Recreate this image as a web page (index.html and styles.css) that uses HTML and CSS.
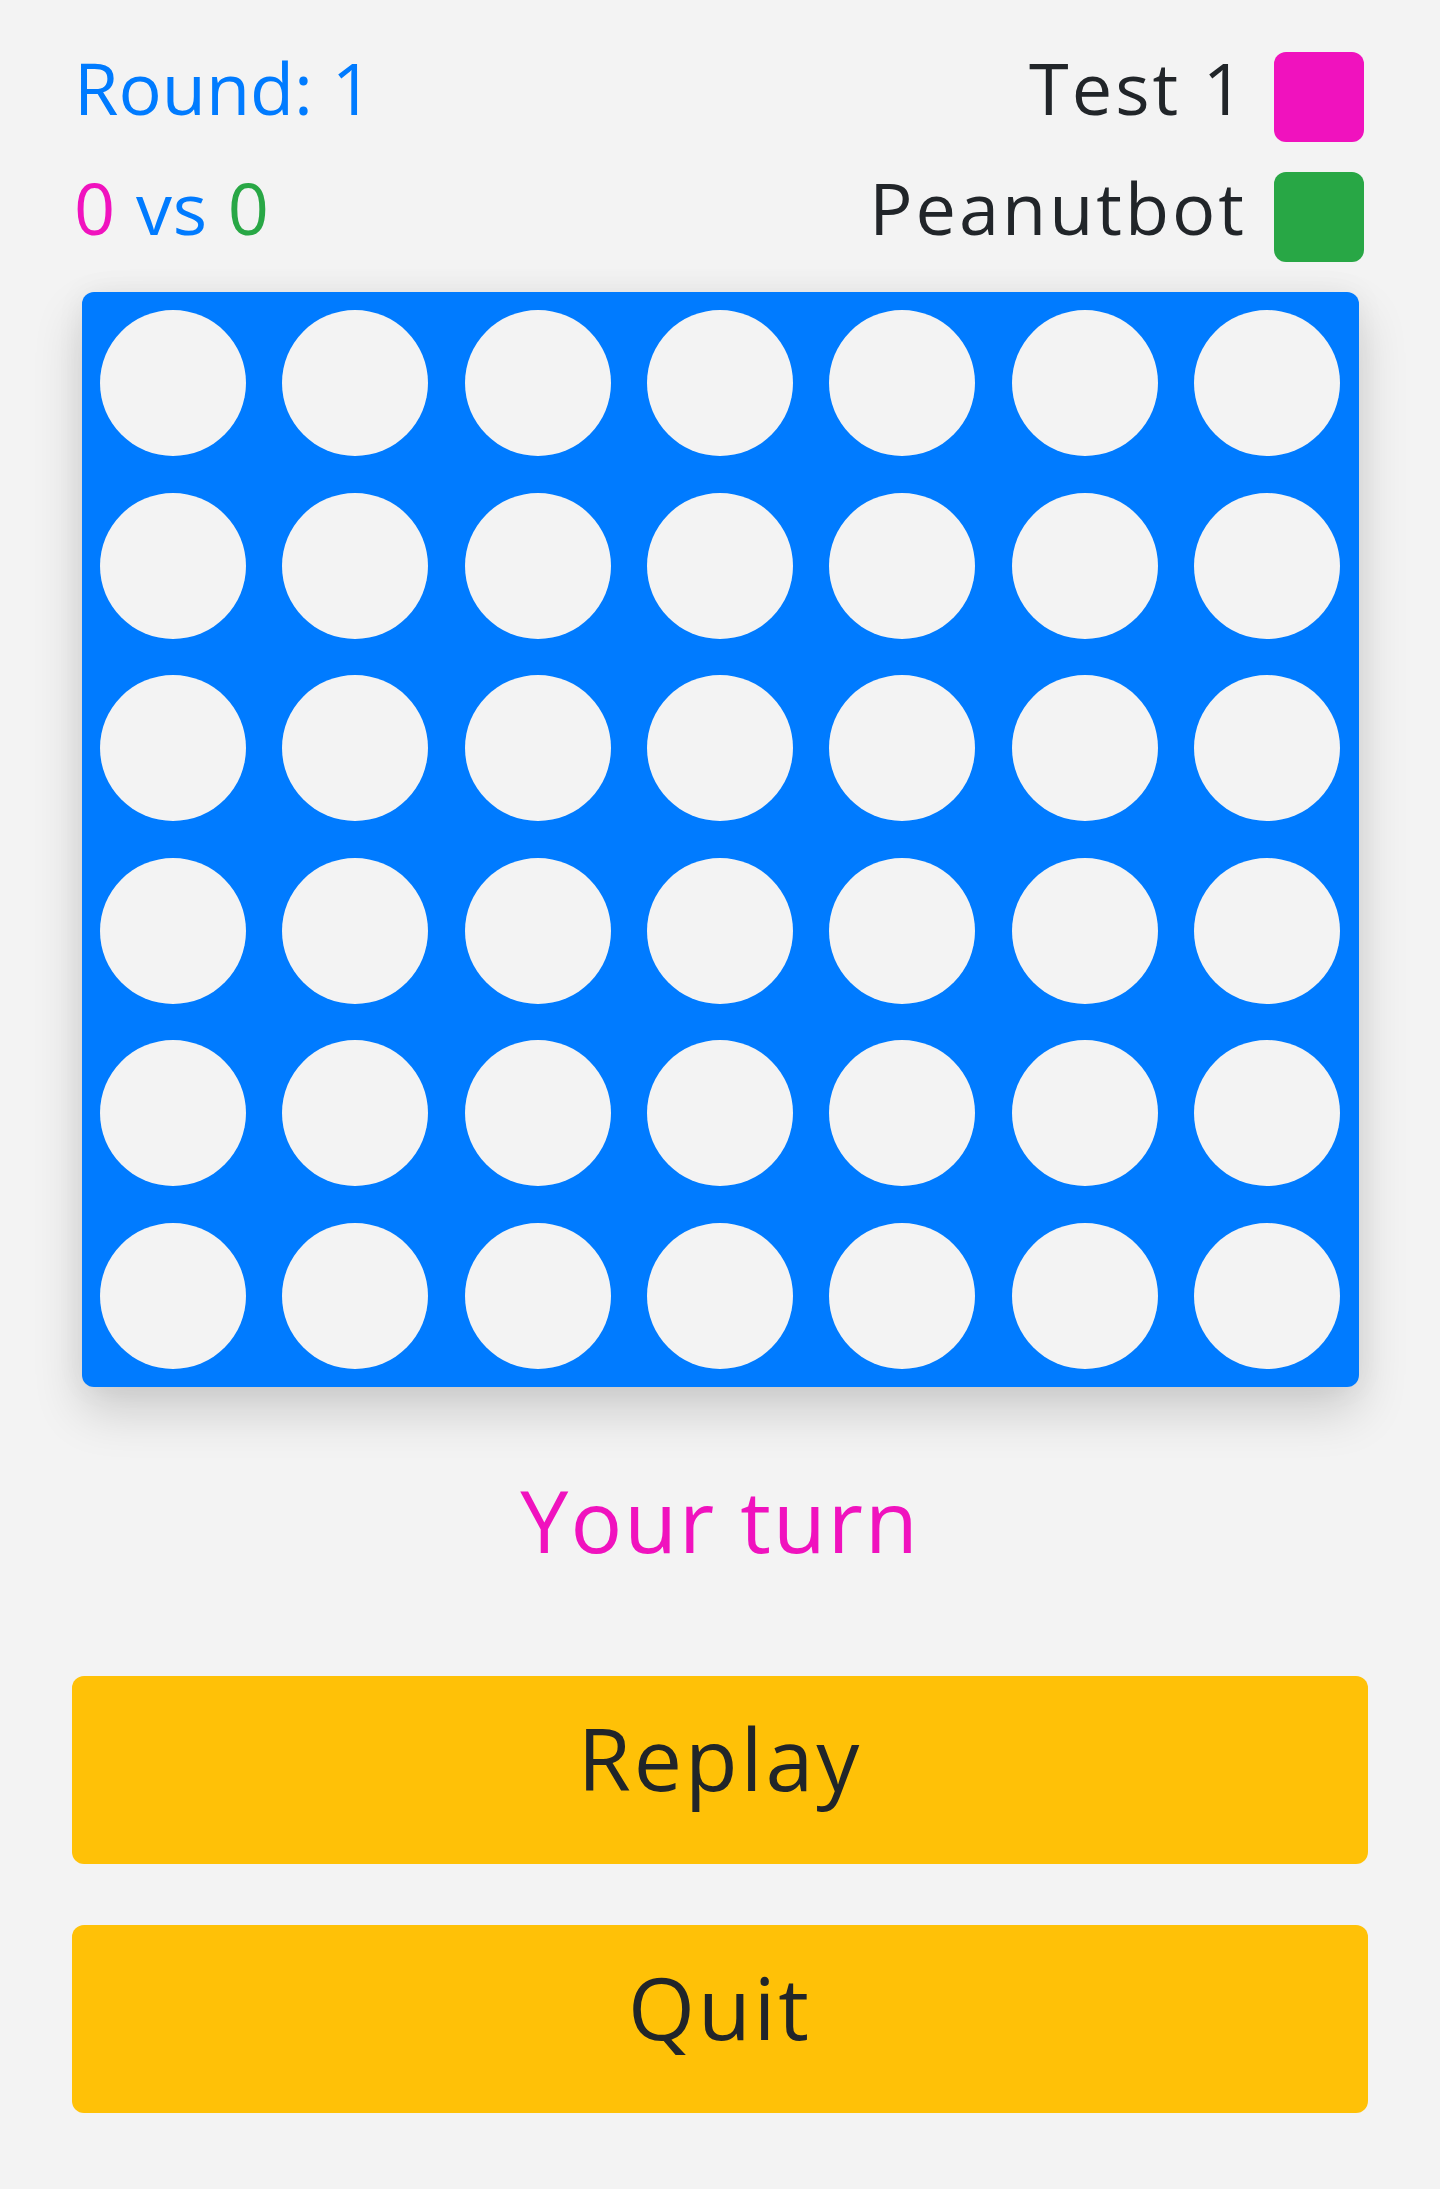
FILE: index.html
```html
<!DOCTYPE html>
<html lang="en">
<head>
<meta charset="utf-8">
<title>Connect Four</title>
<link rel="stylesheet" href="styles.css">
</head>
<body>
<main class="page">
  <header class="top">
    <div class="stats">
      <div class="row round">Round: 1</div>
      <div class="row score"><span class="p1">0</span> vs <span class="p2">0</span></div>
    </div>
    <div class="players">
      <div class="row player"><span class="name">Test 1</span><span class="swatch pink"></span></div>
      <div class="row player"><span class="name">Peanutbot</span><span class="swatch green"></span></div>
    </div>
  </header>

  <section class="board">
    <div class="cell"><span class="hole"></span></div><div class="cell"><span class="hole"></span></div><div class="cell"><span class="hole"></span></div><div class="cell"><span class="hole"></span></div><div class="cell"><span class="hole"></span></div><div class="cell"><span class="hole"></span></div><div class="cell"><span class="hole"></span></div>
    <div class="cell"><span class="hole"></span></div><div class="cell"><span class="hole"></span></div><div class="cell"><span class="hole"></span></div><div class="cell"><span class="hole"></span></div><div class="cell"><span class="hole"></span></div><div class="cell"><span class="hole"></span></div><div class="cell"><span class="hole"></span></div>
    <div class="cell"><span class="hole"></span></div><div class="cell"><span class="hole"></span></div><div class="cell"><span class="hole"></span></div><div class="cell"><span class="hole"></span></div><div class="cell"><span class="hole"></span></div><div class="cell"><span class="hole"></span></div><div class="cell"><span class="hole"></span></div>
    <div class="cell"><span class="hole"></span></div><div class="cell"><span class="hole"></span></div><div class="cell"><span class="hole"></span></div><div class="cell"><span class="hole"></span></div><div class="cell"><span class="hole"></span></div><div class="cell"><span class="hole"></span></div><div class="cell"><span class="hole"></span></div>
    <div class="cell"><span class="hole"></span></div><div class="cell"><span class="hole"></span></div><div class="cell"><span class="hole"></span></div><div class="cell"><span class="hole"></span></div><div class="cell"><span class="hole"></span></div><div class="cell"><span class="hole"></span></div><div class="cell"><span class="hole"></span></div>
    <div class="cell"><span class="hole"></span></div><div class="cell"><span class="hole"></span></div><div class="cell"><span class="hole"></span></div><div class="cell"><span class="hole"></span></div><div class="cell"><span class="hole"></span></div><div class="cell"><span class="hole"></span></div><div class="cell"><span class="hole"></span></div>
  </section>

  <p class="turn">Your turn</p>

  <div class="actions">
    <button class="btn">Replay</button>
    <button class="btn">Quit</button>
  </div>
</main>
</body>
</html>
```

FILE: styles.css
```css
* { box-sizing: border-box; }

html, body {
  margin: 0;
  padding: 0;
  background: #f3f3f3;
}

body {
  font-family: "Open Sans", "Noto Sans", sans-serif;
  color: #212529;
}

.page {
  width: 1440px;
  min-height: 2189px;
  padding: 52px 72px 78px;
}

.top {
  display: flex;
  justify-content: space-between;
  padding: 0 4px 0 2px;
}

.stats, .players {
  display: flex;
  flex-direction: column;
  gap: 30px;
}

.row {
  height: 90px;
  font-size: 72px;
  line-height: 70px;
  white-space: nowrap;
}

.round { color: #007bff; }
.score { color: #007bff; letter-spacing: 1px; }
.p1 { color: #f012be; }
.p2 { color: #28a745; }

.player {
  display: flex;
  align-items: flex-start;
  justify-content: flex-end;
  gap: 30px;
}

.name {
  letter-spacing: 3px;
  margin-right: -3px;
}

.swatch {
  width: 90px;
  height: 90px;
  border-radius: 12px;
  flex: none;
}
.pink { background: #f012be; }
.green { background: #28a745; }

.board {
  width: 1277px;
  margin: 30px auto 0;
  background: #007bff;
  border-radius: 12px;
  display: grid;
  grid-template-columns: repeat(7, 1fr);
  grid-auto-rows: 182.5px;
  box-shadow: 0 24px 50px rgba(0, 0, 0, 0.16), 0 0 30px rgba(0, 0, 0, 0.05);
}

.cell {
  display: flex;
  align-items: center;
  justify-content: center;
}

.hole {
  width: 146px;
  height: 146px;
  border-radius: 50%;
  background: #f3f3f3;
}

.turn {
  margin: 83px 0 0;
  text-align: center;
  color: #f012be;
  font-size: 86px;
  line-height: 100px;
  letter-spacing: 2px;
}

.actions {
  margin-top: 106px;
  display: flex;
  flex-direction: column;
  gap: 61px;
}

.btn {
  display: block;
  width: 100%;
  height: 188px;
  border: none;
  border-radius: 12px;
  background: #ffc107;
  color: #212529;
  font-family: "Open Sans", "Noto Sans", sans-serif;
  font-size: 86px;
  line-height: 100px;
  letter-spacing: 3px;
  padding: 32px 0 56px;
  text-align: center;
}
```
